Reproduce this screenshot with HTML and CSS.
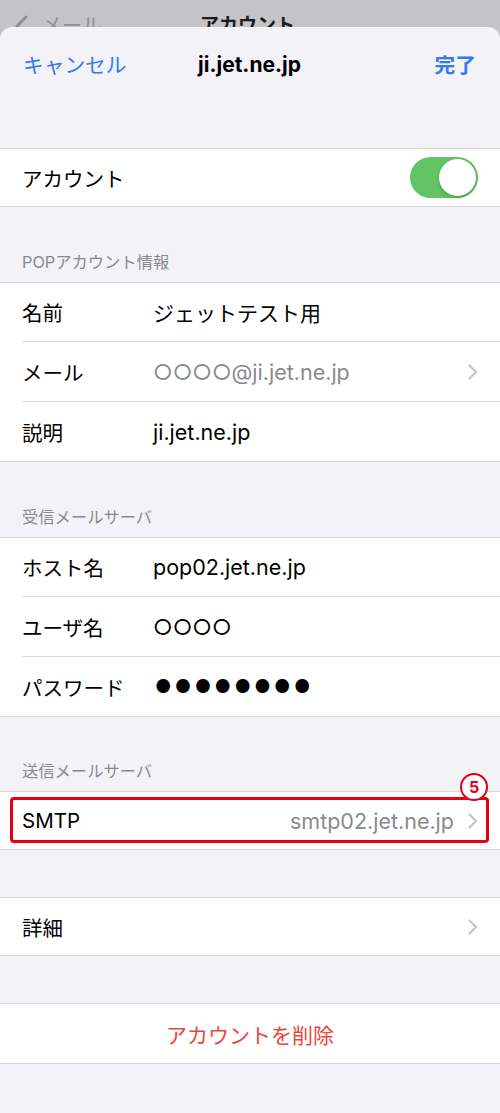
FILE: index.html
```html
<!DOCTYPE html>
<html lang="ja">
<head>
    <meta charset="UTF-8">
    <meta name="viewport" content="width=device-width, initial-scale=1.0">
    <title>アカウント</title>
    <link rel="stylesheet" href="styles.css">
</head>
<body>
    <!-- screen behind the sheet, mostly hidden -->
    <div class="backbar">
        <span class="back-chevron">
            <svg width="14" height="22" viewBox="0 0 14 22"><path d="M12 2 L3 11 L12 20" fill="none" stroke="#8e8e93" stroke-width="3" stroke-linecap="round" stroke-linejoin="round"/></svg>
        </span>
        <span class="back-label">メール</span>
        <span class="back-title">アカウント</span>
    </div>

    <div class="sheet">
        <div class="nav">
            <span class="nav-cancel">キャンセル</span>
            <span class="nav-title">ji.jet.ne.jp</span>
            <span class="nav-done">完了</span>
        </div>

        <div class="spacer"></div>
        <div class="group">
            <div class="row short">
                <span class="label">アカウント</span>
                <span class="switch"><span class="knob"></span></span>
            </div>
        </div>

        <div class="section-header">POPアカウント情報</div>
        <div class="group">
            <div class="row">
                <span class="label">名前</span>
                <span class="value jp">ジェットテスト用</span>
            </div>
            <div class="row">
                <span class="label">メール</span>
                <span class="value muted">○○○○@ji.jet.ne.jp</span>
                <span class="chevron"><svg width="10" height="16" viewBox="0 0 10 16"><path d="M1.5 1.5 L8 8 L1.5 14.5" fill="none" stroke="#c4c4c7" stroke-width="2.2" stroke-linecap="round" stroke-linejoin="round"/></svg></span>
            </div>
            <div class="row">
                <span class="label">説明</span>
                <span class="value">ji.jet.ne.jp</span>
            </div>
        </div>

        <div class="section-header">受信メールサーバ</div>
        <div class="group">
            <div class="row">
                <span class="label">ホスト名</span>
                <span class="value">pop02.jet.ne.jp</span>
            </div>
            <div class="row">
                <span class="label">ユーザ名</span>
                <span class="value">○○○○</span>
            </div>
            <div class="row">
                <span class="label">パスワード</span>
                <span class="value dots">●●●●●●●●</span>
            </div>
        </div>

        <div class="section-header tight">送信メールサーバ</div>
        <div class="group">
            <div class="row short">
                <span class="label">SMTP</span>
                <span class="value muted right">smtp02.jet.ne.jp</span>
                <span class="chevron"><svg width="10" height="16" viewBox="0 0 10 16"><path d="M1.5 1.5 L8 8 L1.5 14.5" fill="none" stroke="#c4c4c7" stroke-width="2.2" stroke-linecap="round" stroke-linejoin="round"/></svg></span>
            </div>
            <div class="highlight"></div>
            <div class="step-badge">5</div>
        </div>

        <div class="spacer"></div>
        <div class="group">
            <div class="row short">
                <span class="label">詳細</span>
                <span class="value"></span>
                <span class="chevron"><svg width="10" height="16" viewBox="0 0 10 16"><path d="M1.5 1.5 L8 8 L1.5 14.5" fill="none" stroke="#c4c4c7" stroke-width="2.2" stroke-linecap="round" stroke-linejoin="round"/></svg></span>
            </div>
        </div>

        <div class="spacer"></div>
        <div class="group">
            <div class="row delete-row">アカウントを削除</div>
        </div>
    </div>
</body>
</html>
```

FILE: styles.css
```css
body {
    margin: 0;
    padding: 0;
    background-color: #c4c4c6;
    font-family: "Inter", "Noto Sans CJK JP", sans-serif;
    color: #000;
}
.backbar {
    height: 27px;
    overflow: hidden;
    display: flex;
    align-items: flex-start;
    padding-top: 14px;
    box-sizing: border-box;
    font-size: 20px;
    line-height: 24px;
}
.back-chevron {
    margin-left: 14px;
    margin-top: 1px;
}
.back-label {
    margin-left: 14px;
    color: #8e8e93;
}
.back-title {
    margin-left: 98px;
    font-size: 19px;
    font-weight: bold;
    color: #1c1c1e;
}
.sheet {
    background-color: #f2f2f7;
    border-radius: 12px 12px 0 0;
    min-height: 1086px;
    overflow: hidden;
}
.nav {
    height: 74px;
    display: grid;
    grid-template-columns: 1fr auto 1fr;
    align-items: center;
    padding: 0 24px 0 23px;
    font-size: 20.7px;
}
.nav-cancel {
    color: #3478f6;
}
.nav-title {
    font-weight: bold;
    font-size: 21px;
}
.nav-done {
    color: #3478f6;
    font-weight: bold;
    justify-self: end;
}
.spacer {
    height: 47px;
}
.section-header {
    height: 75px;
    box-sizing: border-box;
    display: flex;
    align-items: flex-end;
    padding: 0 0 10px 22px;
    font-size: 16.3px;
    line-height: 20px;
    color: #8a8a8e;
}
.section-header.tight {
    height: 74px;
}
.group {
    background-color: #fff;
    border-top: 1px solid #d5d5da;
    border-bottom: 1px solid #d5d5da;
    position: relative;
}
.row {
    height: 58px;
    box-sizing: border-box;
    display: flex;
    align-items: center;
    padding: 0 22px;
    font-size: 20.5px;
    position: relative;
}
.row.short {
    height: 57px;
}
.row + .row {
    height: 60px;
    border-top: 1px solid #dcdce0;
    margin-left: 22px;
    padding-left: 0;
}
.label {
    width: 131px;
    flex: none;
}
.value {
    flex: 1;
    font-size: 21.5px;
}
.value.jp {
    font-size: 21px;
}
.value.muted {
    color: #8a8a8e;
}
.value.right {
    text-align: right;
    margin-right: 14px;
}
.dots {
    font-size: 18px;
    letter-spacing: 3.4px;
    margin-left: 2px;
}
.chevron {
    display: flex;
    align-items: center;
}
.switch {
    margin-left: auto;
    width: 68px;
    height: 41px;
    border-radius: 21px;
    background-color: #63c466;
    position: relative;
}
.knob {
    position: absolute;
    top: 2px;
    right: 2px;
    width: 37px;
    height: 37px;
    border-radius: 50%;
    background-color: #fff;
    box-shadow: 0 2px 4px rgba(0, 0, 0, 0.2);
}
.highlight {
    position: absolute;
    left: 10px;
    right: 11px;
    top: 5px;
    bottom: 6px;
    border: 3px solid #e60012;
    border-radius: 4px;
}
.step-badge {
    position: absolute;
    left: 460px;
    top: -19px;
    width: 24px;
    height: 24px;
    border: 2px solid #e60012;
    border-radius: 50%;
    background-color: #fff;
    color: #e60012;
    font-weight: bold;
    font-size: 16px;
    line-height: 24px;
    text-align: center;
}
.delete-row {
    justify-content: center;
    color: #e8473d;
    height: 59px;
    font-size: 21px;
}
```
